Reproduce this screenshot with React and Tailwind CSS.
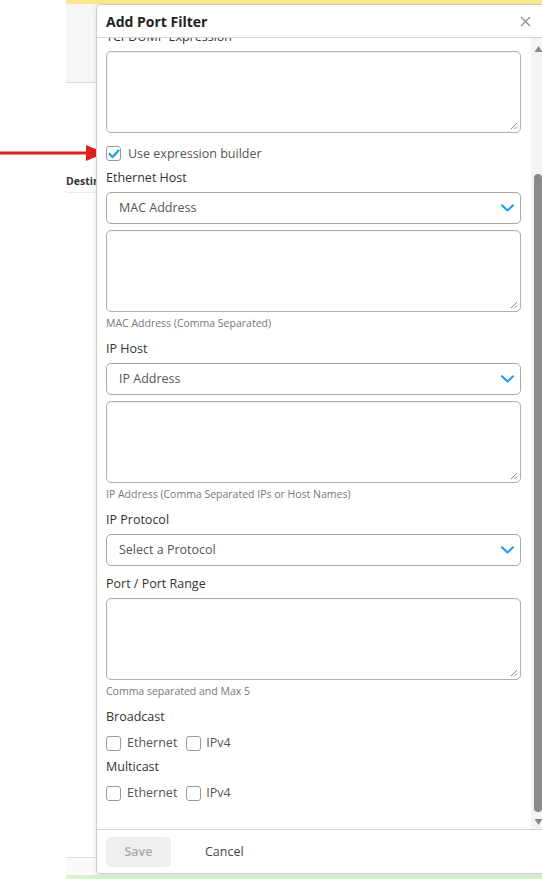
import React from "react";

const font = { fontFamily: '"Open Sans", "Noto Sans", sans-serif' };

function Chevron() {
  return (
    <svg width="13" height="8" viewBox="0 0 13 8" className="shrink-0">
      <path d="M1 1.2 L6.5 6.5 L12 1.2" fill="none" stroke="#1d9bf0" strokeWidth="2" strokeLinecap="round" strokeLinejoin="round" />
    </svg>
  );
}

function ResizeGrip() {
  return (
    <svg width="8" height="8" viewBox="0 0 8 8" className="absolute bottom-[2px] right-[2px]">
      <path d="M7 1 L1 7 M7 4.5 L4.5 7" stroke="#777" strokeWidth="0.9" />
    </svg>
  );
}

function Label({ children, className = "" }) {
  return <div className={`h-[17px] text-[12.5px] leading-[17px] text-[#333] ${className}`}>{children}</div>;
}

function Select({ value }) {
  return (
    <div className="flex h-[32px] w-[415px] items-center justify-between rounded-[5px] border border-[#a8a8a8] bg-white pl-[12px] pr-[6px]">
      <span className="pt-[1px] text-[12.5px] text-[#555]">{value}</span>
      <Chevron />
    </div>
  );
}

function Area({ className = "" }) {
  return (
    <div className={`relative h-[82px] w-[415px] rounded-[5px] border border-[#b0b0b0] bg-white shadow-[inset_0_1px_2px_rgba(0,0,0,0.06)] ${className}`}>
      <ResizeGrip />
    </div>
  );
}

function Helper({ children }) {
  return <div className="mt-[4px] h-[14px] text-[10.5px] leading-[14px] text-[#777]">{children}</div>;
}

function Box({ checked = false }) {
  return (
    <div className="flex h-[15px] w-[15px] shrink-0 items-center justify-center rounded-[3px] border border-[#999] bg-white">
      {checked && (
        <svg width="12" height="10" viewBox="0 0 12 10">
          <path d="M1.5 5 L4.6 8 L10.5 1.5" fill="none" stroke="#1d9bf0" strokeWidth="2.2" strokeLinecap="round" strokeLinejoin="round" />
        </svg>
      )}
    </div>
  );
}

function CheckPair() {
  return (
    <div className="flex h-[15px] items-center text-[12.5px] text-[#555]">
      <Box />
      <span className="ml-[6px]">Ethernet</span>
      <div className="ml-[9px]"><Box /></div>
      <span className="ml-[5px]">IPv4</span>
    </div>
  );
}

export default function App() {
  return (
    <div className="relative h-[879px] w-[542px] overflow-hidden bg-white" style={font}>
      {/* page behind the dialog */}
      <div className="flex h-full">
        <div className="w-[66px] shrink-0" />
        <div className="flex flex-1 flex-col">
          <div className="h-[4px] bg-[#fce78f]" />
          <div className="h-[79px] border-b border-[#dcdcdc] bg-[#f6f6f6]" />
          <div className="mt-[89px] h-[21px] border-b border-[#ececec] text-[10.5px] font-bold leading-[18px] text-[#333]">Destination</div>
          <div className="flex-1" />
          <div className="h-[18px] border-t border-[#dcdcdc] bg-[#fafafa]" />
          <div className="h-[4px] bg-[#d8f3c9]" />
        </div>
      </div>

      {/* red pointer arrow */}
      <svg className="absolute left-0 top-[143px]" width="106" height="20" viewBox="0 0 106 20">
        <rect x="0" y="8.5" width="90" height="3" fill="#e0201c" />
        <path d="M86 2 L105 10 L86 18 Z" fill="#e0201c" />
      </svg>

      {/* dialog */}
      <div className="absolute left-[96px] top-[4px] flex h-[870px] w-[452px] flex-col rounded-[4px] border border-[#cfcfcf] bg-white shadow-[0_1px_4px_rgba(0,0,0,0.12)]">
        <div className="flex h-[33px] shrink-0 items-center justify-between border-b border-[#d4d4d4] pl-[9px] pr-[12px]">
          <span className="text-[14px] font-bold text-[#222]">Add Port Filter</span>
          <svg width="11" height="11" viewBox="0 0 11 11" className="mr-[4px]">
            <path d="M1 1 L10 10 M10 1 L1 10" stroke="#888" strokeWidth="1.1" />
          </svg>
        </div>

        <div className="flex min-h-0 flex-1">
          <div className="min-w-0 flex-1 overflow-hidden pl-[9px]">
            <div className="-mt-[10px]">
              <Label>TCPDUMP Expression</Label>
              <Area className="mt-[6px]" />
              <div className="mt-[13px] flex h-[15px] items-center">
                <Box checked />
                <span className="ml-[7px] pt-[1px] text-[12.5px] text-[#555]">Use expression builder</span>
              </div>
              <Label className="mt-[8px]">Ethernet Host</Label>
              <div className="mt-[6px]"><Select value="MAC Address" /></div>
              <Area className="mt-[6px]" />
              <Helper>MAC Address (Comma Separated)</Helper>
              <Label className="mt-[10px]">IP Host</Label>
              <div className="mt-[6px]"><Select value="IP Address" /></div>
              <Area className="mt-[6px]" />
              <Helper>IP Address (Comma Separated IPs or Host Names)</Helper>
              <Label className="mt-[10px]">IP Protocol</Label>
              <div className="mt-[6px]"><Select value="Select a Protocol" /></div>
              <Label className="mt-[9px]">Port / Port Range</Label>
              <div className="mt-[6px]"><Area /></div>
              <Helper>Comma separated and Max 5</Helper>
              <Label className="mt-[10px]">Broadcast</Label>
              <div className="mt-[11px]"><CheckPair /></div>
              <Label className="mt-[7px]">Multicast</Label>
              <div className="mt-[11px]"><CheckPair /></div>
            </div>
          </div>

          {/* scrollbar */}
          <div className="flex w-[16px] shrink-0 flex-col items-start bg-[#f4f4f4] pl-[3px]">
            <svg width="9" height="14" viewBox="0 0 9 14" className="mt-[3px]">
              <path d="M0.5 11 L4.5 5 L8.5 11 Z" fill="#8a8a8a" />
            </svg>
            <div className="mt-[119px] h-[638px] w-[8px] rounded-[4px] bg-[#8a8a8a]" />
            <svg width="9" height="14" viewBox="0 0 9 14" className="mt-[3px]">
              <path d="M0.5 4 L4.5 10 L8.5 4 Z" fill="#8a8a8a" />
            </svg>
          </div>
        </div>

        <div className="flex h-[44px] shrink-0 items-center border-t border-[#d4d4d4] pl-[9px]">
          <div className="flex h-[30px] w-[65px] items-center justify-center rounded-[5px] bg-[#efefef] pt-[2px] text-[12.5px] font-semibold text-[#aaa]">Save</div>
          <span className="ml-[34px] pt-[2px] text-[12.5px] text-[#444]">Cancel</span>
        </div>
      </div>
    </div>
  );
}
